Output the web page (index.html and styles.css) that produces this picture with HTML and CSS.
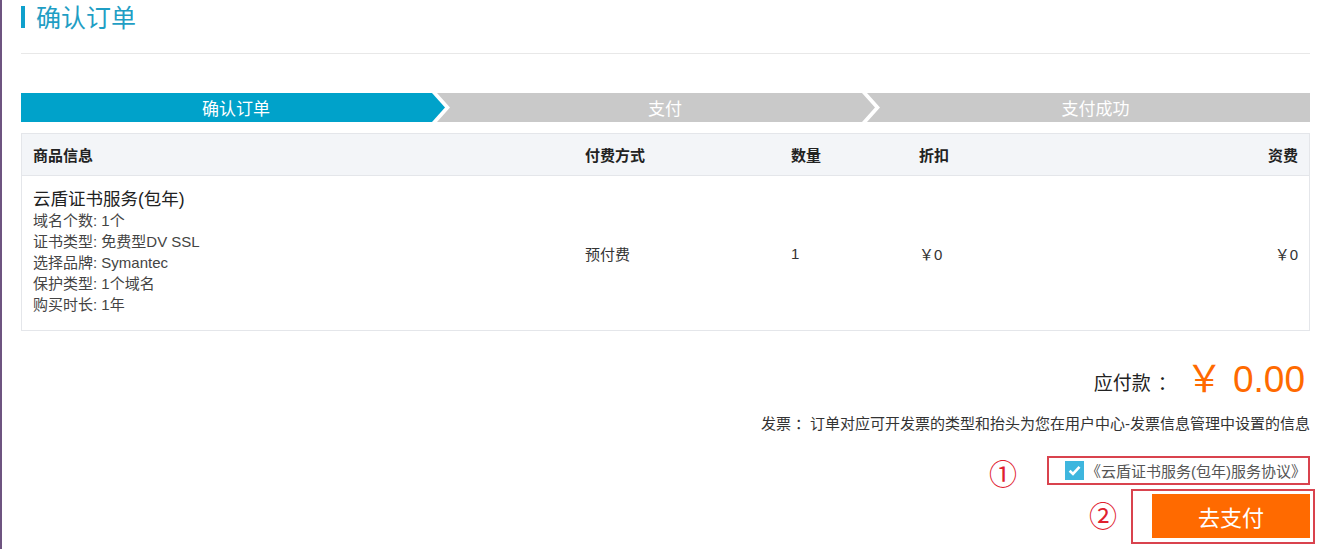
FILE: index.html
```html
<!DOCTYPE html>
<html lang="zh-CN">
<head>
    <meta charset="UTF-8">
    <meta name="viewport" content="width=device-width, initial-scale=1.0">
    <title>确认订单</title>
    <link rel="stylesheet" href="styles.css">
</head>
<body>
    <div class="page">
        <div class="page-title"><span class="title-bar"></span>确认订单</div>
        <div class="divider"></div>

        <div class="steps">
            <div class="step step-first step-active"><span>确认订单</span></div>
            <div class="step step-mid"><span>支付</span></div>
            <div class="step step-last"><span>支付成功</span></div>
        </div>

        <table class="order-table">
            <tr>
                <th class="col-goods">商品信息</th>
                <th class="col-pay">付费方式</th>
                <th class="col-num">数量</th>
                <th class="col-discount">折扣</th>
                <th class="col-fee">资费</th>
            </tr>
            <tr>
                <td class="goods-cell">
                    <div class="goods-name">云盾证书服务(包年)</div>
                    <div class="goods-line">域名个数: 1个</div>
                    <div class="goods-line">证书类型: 免费型DV SSL</div>
                    <div class="goods-line">选择品牌: Symantec</div>
                    <div class="goods-line">保护类型: 1个域名</div>
                    <div class="goods-line">购买时长: 1年</div>
                </td>
                <td>预付费</td>
                <td>1</td>
                <td>￥0</td>
                <td class="col-fee">￥0</td>
            </tr>
        </table>

        <div class="total">
            <span class="total-label">应付款<span class="colon">：</span></span>
            <span class="total-amount">￥ 0.00</span>
        </div>
        <div class="invoice">发票<span class="colon">：</span>订单对应可开发票的类型和抬头为您在用户中心-发票信息管理中设置的信息</div>

        <div class="agree-row">
            <span class="mark">①</span>
            <label class="agree-box">
                <span class="checkbox">
                    <svg width="13" height="11" viewBox="0 0 12 10"><path d="M1.5 5.2 L4.6 8.2 L10.6 1.6" fill="none" stroke="#fff" stroke-width="2.4"/></svg>
                </span>
                《云盾证书服务(包年)服务协议》
            </label>
        </div>
        <div class="pay-row">
            <span class="mark">②</span>
            <div class="pay-box">
                <button class="btn-pay">去支付</button>
            </div>
        </div>
    </div>
</body>
</html>
```

FILE: styles.css
```css
body { margin: 0; font-family: "Liberation Sans", "Noto Sans CJK SC", sans-serif; color: #333; background: #fff; border-left: 2px solid #6e5480; min-height: 549px; box-sizing: border-box; }
.page { padding: 0 10px 0 19px; }

.page-title { display: flex; align-items: flex-start; height: 28px; line-height: 28px; padding-top: 2px; font-size: 25px; color: #1f9ec4; font-family: "Noto Sans CJK SC", sans-serif; }
.title-bar { width: 4px; height: 22px; background: #0fa0cc; margin: 4px 11px 0 0; }
.divider { height: 1px; background: #e8e8e8; margin-top: 23px; }

.steps { display: flex; height: 29px; margin-top: 39px; }
.step { background: #c9c9c9; color: #fff; font-size: 17px; font-family: "Noto Sans CJK SC", sans-serif; display: flex; align-items: center; justify-content: center; padding-left: 14px; margin-left: -8px; box-sizing: border-box;
    clip-path: polygon(0 0, calc(100% - 13px) 0, 100% 50%, calc(100% - 13px) 100%, 0 100%, 13px 50%); }
.step-first { flex: 0 0 424px; margin-left: 0; padding-left: 6px; clip-path: polygon(0 0, calc(100% - 13px) 0, 100% 50%, calc(100% - 13px) 100%, 0 100%); }
.step-mid { flex: 0 0 438px; padding-left: 18px; }
.step-last { flex: 1; clip-path: polygon(0 0, 100% 0, 100% 100%, 0 100%, 13px 50%); }
.step-active { background: #00a2ca; }

.order-table { width: 100%; border-collapse: collapse; margin-top: 11px; border: 1px solid #e4e6ea; font-size: 15px; }
.order-table th { background: #f3f5f8; height: 41px; text-align: left; font-weight: bold; color: #222; padding: 0 11px; border-bottom: 1px solid #e4e6ea; }
.order-table td { padding: 0 11px; height: 154px; vertical-align: middle; color: #333; }
.col-goods { width: 530px; }
.col-pay { width: 184px; }
.col-num { width: 106px; }
.order-table .col-fee { text-align: right; }
.goods-cell div:last-child { margin-bottom: 4px; }
.goods-name { font-size: 17.5px; line-height: 22px; color: #222; }
.goods-line { font-size: 15px; line-height: 21px; color: #444; }

.total { display: flex; justify-content: flex-end; align-items: center; margin-top: 22px; height: 46px; }
.total-label { font-size: 19px; color: #222; margin-top: 10px; margin-right: 9px; font-family: "Noto Sans CJK SC", sans-serif; }
.total-label .colon { margin-left: 7px; }
.total-amount { font-size: 37px; color: #ff6a00; margin-right: 5px; }

.invoice { text-align: right; font-size: 15px; color: #333; margin-top: 15px; line-height: 20px; }
.invoice .colon { padding-left: 4px; }

.agree-row { display: flex; justify-content: flex-end; align-items: flex-start; margin-top: 22px; }
.mark { color: #e0202e; font-size: 28px; font-family: "DejaVu Serif", serif; line-height: 1; }
.agree-row .mark { margin: 6px 30px -10px 0; }
.agree-box { display: flex; align-items: center; height: 25px; border: 2px solid #d9434e; padding: 0 2px 0 16px; font-size: 15px; color: #555; }
.checkbox { width: 19px; height: 19px; background: #3eb6de; display: flex; align-items: center; justify-content: center; margin-right: 2px; }

.pay-row { display: flex; justify-content: flex-end; align-items: center; margin-right: -5px; margin-top: 4px; }
.pay-row .mark { margin-right: 14px; margin-top: 3px; }
.pay-box { border: 2px solid #d9434e; padding: 3px 3px 4px 19px; }
.btn-pay { width: 158px; height: 44px; border: none; background: #ff6a00; color: #fff; font-size: 22px; font-family: "Noto Sans CJK SC", sans-serif; cursor: pointer; }
```
